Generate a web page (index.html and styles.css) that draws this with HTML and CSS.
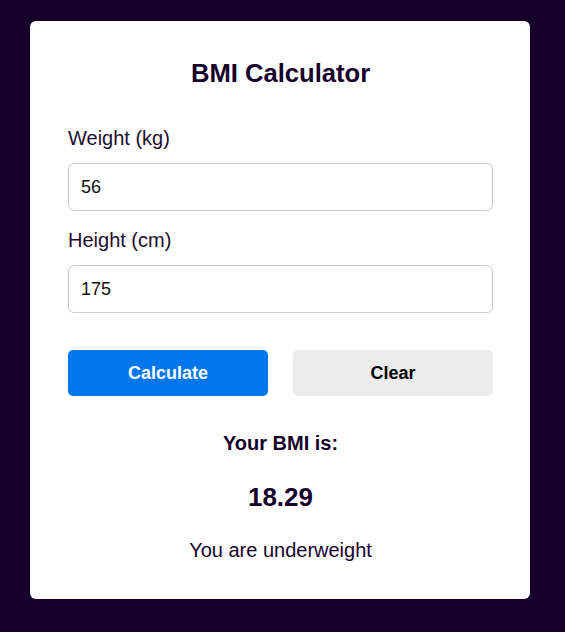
FILE: index.html
```html
<!DOCTYPE html>
<html lang="en">
<head>
<meta charset="utf-8">
<title>BMI Calculator</title>
<link rel="stylesheet" href="styles.css">
</head>
<body>
<main class="card">
  <h1 class="title">BMI Calculator</h1>
  <div class="field">
    <label class="label" for="weight">Weight (kg)</label>
    <input class="input" id="weight" type="text" value="56">
  </div>
  <div class="field">
    <label class="label" for="height">Height (cm)</label>
    <input class="input" id="height" type="text" value="175">
  </div>
  <div class="actions">
    <button class="btn btn-primary" type="button">Calculate</button>
    <button class="btn btn-secondary" type="button">Clear</button>
  </div>
  <section class="result">
    <h3 class="result-heading">Your BMI is:</h3>
    <p class="result-value">18.29</p>
    <p class="result-text">You are underweight</p>
  </section>
</main>
</body>
</html>
```
FILE: styles.css
```css
* { box-sizing: border-box; }
html, body {
  margin: 0;
  padding: 0;
  background: #16002b;
  font-family: "Liberation Sans", Arial, sans-serif;
  color: #16002b;
}
body {
  padding: 21px 35px 33px 30px;
}
.card {
  width: 500px;
  background: #ffffff;
  border-radius: 6px;
  padding: 38px 37px 37px 38px;
  display: flex;
  flex-direction: column;
}
.title {
  margin: 0 0 39px 0;
  font-size: 25.6px;
  font-weight: bold;
  text-align: center;
  line-height: normal;
}
.field {
  display: flex;
  flex-direction: column;
  margin-bottom: 18px;
}
.label {
  font-size: 20px;
  line-height: 23px;
  margin-bottom: 13px;
  color: #1c0d2e;
}
.input {
  width: 100%;
  height: 48px;
  border: 1px solid #cccccc;
  border-radius: 6px;
  padding: 0 12px;
  font-family: "Liberation Sans", Arial, sans-serif;
  font-size: 18px;
  color: #111111;
  background: #fff;
  outline: none;
}
.actions {
  display: flex;
  justify-content: space-between;
  margin-top: 19px;
}
.btn {
  width: 200px;
  height: 46px;
  border: none;
  border-radius: 5px;
  font-family: "Liberation Sans", Arial, sans-serif;
  font-size: 18px;
  font-weight: bold;
  cursor: pointer;
}
.btn-primary {
  background: #0077ee;
  color: #ffffff;
}
.btn-secondary {
  background: #ececec;
  color: #000000;
}
.result {
  margin-top: 36px;
  text-align: center;
}
.result-heading {
  margin: 0;
  font-size: 20px;
  line-height: 23px;
  font-weight: bold;
}
.result-value {
  margin: 27px 0 0 0;
  font-size: 26px;
  font-weight: bold;
  line-height: 30px;
}
.result-text {
  margin: 27px 0 0 0;
  font-size: 20px;
  line-height: 23px;
}
```
